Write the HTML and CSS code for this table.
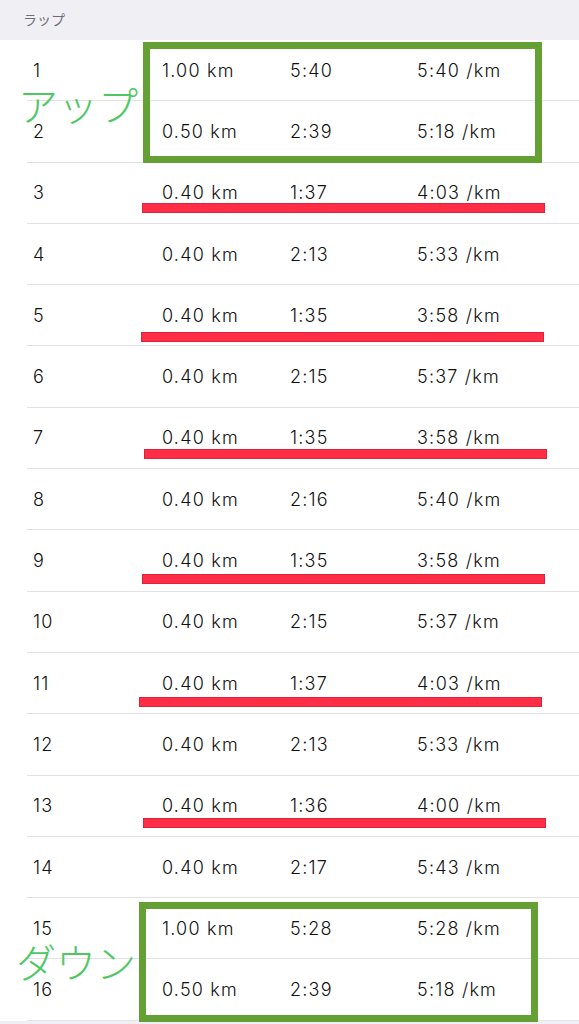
FILE: index.html
```html
<!DOCTYPE html>
<html lang="ja">
<head>
<meta charset="utf-8">
<title>ラップ</title>
<link rel="stylesheet" href="styles.css">
</head>
<body>
<div class="page">
  <div class="header">ラップ</div>
  <div class="laps">
    <div class="row"><span class="n">1</span><span>1.00 km</span><span>5:40</span><span>5:40 /km</span></div>
    <div class="row"><span class="n">2</span><span>0.50 km</span><span>2:39</span><span>5:18 /km</span></div>
    <div class="row"><span class="n">3</span><span>0.40 km</span><span>1:37</span><span>4:03 /km</span></div>
    <div class="row"><span class="n">4</span><span>0.40 km</span><span>2:13</span><span>5:33 /km</span></div>
    <div class="row"><span class="n">5</span><span>0.40 km</span><span>1:35</span><span>3:58 /km</span></div>
    <div class="row"><span class="n">6</span><span>0.40 km</span><span>2:15</span><span>5:37 /km</span></div>
    <div class="row"><span class="n">7</span><span>0.40 km</span><span>1:35</span><span>3:58 /km</span></div>
    <div class="row"><span class="n">8</span><span>0.40 km</span><span>2:16</span><span>5:40 /km</span></div>
    <div class="row"><span class="n">9</span><span>0.40 km</span><span>1:35</span><span>3:58 /km</span></div>
    <div class="row"><span class="n">10</span><span>0.40 km</span><span>2:15</span><span>5:37 /km</span></div>
    <div class="row"><span class="n">11</span><span>0.40 km</span><span>1:37</span><span>4:03 /km</span></div>
    <div class="row"><span class="n">12</span><span>0.40 km</span><span>2:13</span><span>5:33 /km</span></div>
    <div class="row"><span class="n">13</span><span>0.40 km</span><span>1:36</span><span>4:00 /km</span></div>
    <div class="row"><span class="n">14</span><span>0.40 km</span><span>2:17</span><span>5:43 /km</span></div>
    <div class="row"><span class="n">15</span><span>1.00 km</span><span>5:28</span><span>5:28 /km</span></div>
    <div class="row"><span class="n">16</span><span>0.50 km</span><span>2:39</span><span>5:18 /km</span></div>
  </div>

  <div class="box box-up"></div>
  <div class="box box-down"></div>
  <div class="label label-up">アップ</div>
  <div class="label label-down">ダウン</div>

  <div class="strike s3"></div>
  <div class="strike s5"></div>
  <div class="strike s7"></div>
  <div class="strike s9"></div>
  <div class="strike s11"></div>
  <div class="strike s13"></div>
</div>
</body>
</html>
```

FILE: styles.css
```css
html, body {
  margin: 0;
  padding: 0;
}

body {
  background: #efeff4;
  width: 579px;
  height: 1024px;
  overflow: hidden;
  font-family: "Inter", "Liberation Sans", "Noto Sans CJK JP", sans-serif;
  color: #111;
}

.page {
  position: relative;
  width: 579px;
  height: 1024px;
}

.header {
  height: 40px;
  box-sizing: border-box;
  padding-left: 23px;
  padding-bottom: 2px;
  display: flex;
  align-items: center;
  font-family: "Noto Sans CJK JP", sans-serif;
  font-size: 14px;
  color: #6d6d72;
  background: #efeff4;
}

.laps {
  background: #fff;
}

.row {
  height: 61.3px;
  box-sizing: border-box;
  margin-left: 27px;
  padding-left: 6px;
  border-bottom: 1px solid #e2e2e6;
  display: grid;
  grid-template-columns: 129px 128px 127px 1fr;
  align-items: center;
  font-size: 18px;
  font-weight: 300;
  letter-spacing: 1.2px;
}

.row:last-child {
  border-bottom-color: #e6e6ea;
}

.box {
  position: absolute;
  box-sizing: border-box;
  border: 7.5px solid #64a033;
}

.box-up {
  left: 143px;
  top: 42px;
  width: 399px;
  height: 121px;
}

.box-down {
  left: 139px;
  top: 902px;
  width: 399px;
  height: 120px;
}

.label {
  position: absolute;
  font-family: "Noto Sans CJK JP", sans-serif;
  font-weight: 300;
  font-size: 40px;
  line-height: 40px;
  color: #4fc763;
}

.label-up {
  left: 18px;
  top: 84px;
}

.label-down {
  left: 16px;
  top: 941px;
}

.strike {
  position: absolute;
  box-sizing: border-box;
  width: 403px;
  height: 10px;
  background: #ff2d45;
  border: 1px solid #d9243b;
}

.s3 { left: 142px; top: 203px; }
.s5 { left: 141px; top: 332px; }
.s7 { left: 144px; top: 449px; }
.s9 { left: 142px; top: 574px; }
.s11 { left: 139px; top: 697px; }
.s13 { left: 143px; top: 818px; }
```
